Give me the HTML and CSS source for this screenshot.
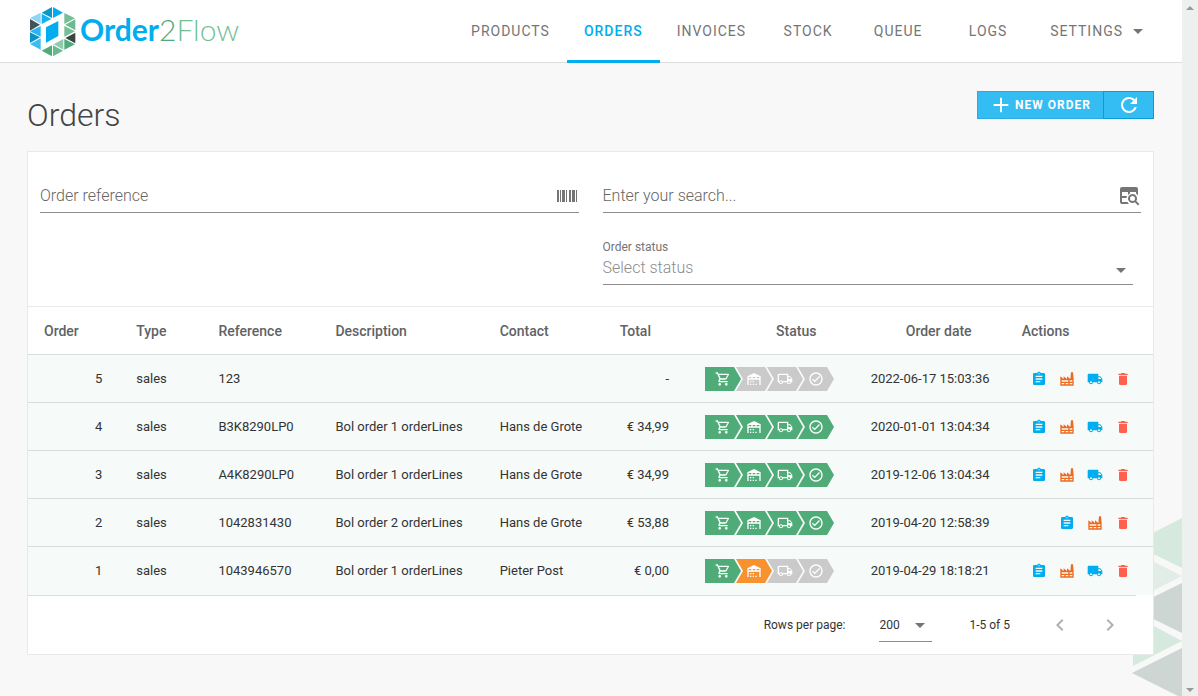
FILE: index.html
```html
<!DOCTYPE html>
<html lang="en">
<head>
  <meta charset="UTF-8" />
  <meta name="viewport" content="width=device-width, initial-scale=1.0"/>
  <title>Order2Flow - Orders</title>
  <link rel="stylesheet" href="styles.css">
</head>
<body>
  <!-- Icon set -->
  <svg class="sprite" aria-hidden="true">
    <symbol id="cart" viewBox="0 0 24 24"><path d="M17,18A2,2 0 0,1 19,20A2,2 0 0,1 17,22C15.89,22 15,21.1 15,20C15,18.89 15.89,18 17,18M1,2H4.27L5.21,4H20A1,1 0 0,1 21,5C21,5.17 20.95,5.34 20.88,5.5L17.3,11.97C16.96,12.58 16.3,13 15.55,13H8.1L7.2,14.63L7.17,14.75A0.25,0.25 0 0,0 7.42,15H19V17H7C5.89,17 5,16.1 5,15C5,14.65 5.09,14.32 5.24,14.04L6.6,11.59L3,4H1V2M7,18A2,2 0 0,1 9,20A2,2 0 0,1 7,22C5.89,22 5,21.1 5,20C5,18.89 5.89,18 7,18M16,11L18.78,6H6.14L8.5,11H16Z"/></symbol>
    <symbol id="warehouse" viewBox="0 0 24 24"><path d="M6 19H8V21H6V19M12 3L2 8V21H4V13H20V21H22V8L12 3M8 11H4V9H8V11M14 11H10V9H14V11M20 11H16V9H20V11M6 15H8V17H6V15M10 15H12V17H10V15M10 19H12V21H10V19M14 19H16V21H14V19Z"/></symbol>
    <symbol id="truck-outline" viewBox="0 0 24 24"><path d="M18 18.5C18.83 18.5 19.5 17.83 19.5 17C19.5 16.17 18.83 15.5 18 15.5C17.17 15.5 16.5 16.17 16.5 17C16.5 17.83 17.17 18.5 18 18.5M19.5 9.5H17V12H21.46L19.5 9.5M6 18.5C6.83 18.5 7.5 17.83 7.5 17C7.5 16.17 6.83 15.5 6 15.5C5.17 15.5 4.5 16.17 4.5 17C4.5 17.83 5.17 18.5 6 18.5M20 8L23 12V17H21C21 18.66 19.66 20 18 20C16.34 20 15 18.66 15 17H9C9 18.66 7.66 20 6 20C4.34 20 3 18.66 3 17H1V6C1 4.89 1.89 4 3 4H17V8H20M3 6V15H3.76C4.31 14.39 5.11 14 6 14C6.89 14 7.69 14.39 8.24 15H15V6H3Z"/></symbol>
    <symbol id="check" viewBox="0 0 24 24"><path d="M12 2C6.5 2 2 6.5 2 12S6.5 22 12 22 22 17.5 22 12 17.5 2 12 2M12 20C7.59 20 4 16.41 4 12S7.59 4 12 4 20 7.59 20 12 16.41 20 12 20M16.59 7.58L10 14.17L7.41 11.59L6 13L10 17L18 9L16.59 7.58Z"/></symbol>
    <symbol id="clipboard" viewBox="0 0 24 24"><path d="M17,9H7V7H17M17,13H7V11H17M14,17H7V15H14M12,3A1,1 0 0,1 13,4A1,1 0 0,1 12,5A1,1 0 0,1 11,4A1,1 0 0,1 12,3M19,3H14.82C14.4,1.84 13.3,1 12,1C10.7,1 9.6,1.84 9.18,3H5A2,2 0 0,0 3,5V19A2,2 0 0,0 5,21H19A2,2 0 0,0 21,19V5A2,2 0 0,0 19,3Z"/></symbol>
    <symbol id="factory" viewBox="0 0 24 24"><path d="M4,18V20H8V18H4M4,14V16H14V14H4M10,18V20H14V18H10M16,14V16H20V14H16M16,18V20H20V18H16M2,22V8L7,12V8L12,12V8L17,12L18,2H21L22,12V22H2Z"/></symbol>
    <symbol id="truck" viewBox="0 0 24 24"><path d="M18,18.5A1.5,1.5 0 0,1 16.5,17A1.5,1.5 0 0,1 18,15.5A1.5,1.5 0 0,1 19.5,17A1.5,1.5 0 0,1 18,18.5M19.5,9.5L21.46,12H17V9.5M6,18.5A1.5,1.5 0 0,1 4.5,17A1.5,1.5 0 0,1 6,15.5A1.5,1.5 0 0,1 7.5,17A1.5,1.5 0 0,1 6,18.5M20,8H17V4H3C1.89,4 1,4.89 1,6V17H3A3,3 0 0,0 6,20A3,3 0 0,0 9,17H15A3,3 0 0,0 18,20A3,3 0 0,0 21,17H23V12L20,8Z"/></symbol>
    <symbol id="delete" viewBox="0 0 24 24"><path d="M19,4H15.5L14.5,3H9.5L8.5,4H5V6H19M6,19A2,2 0 0,0 8,21H16A2,2 0 0,0 18,19V7H6V19Z"/></symbol>
    <symbol id="plus" viewBox="0 0 24 24"><path d="M20,13H13V20H11V13H4V11H11V4H13V11H20V13Z"/></symbol>
    <symbol id="refresh" viewBox="0 0 24 24"><path d="M17.65,6.35C16.2,4.9 14.21,4 12,4A8,8 0 0,0 4,12A8,8 0 0,0 12,20C15.73,20 18.84,17.45 19.73,14H17.65C16.83,16.33 14.61,18 12,18A6,6 0 0,1 6,12A6,6 0 0,1 12,6C13.66,6 15.14,6.69 16.22,7.78L13,11H20V4L17.65,6.35Z"/></symbol>
    <symbol id="barcode" viewBox="0 0 24 24"><path d="M2,6H4V18H2V6M5,6H6V18H5V6M7,6H10V18H7V6M11,6H12V18H11V6M14,6H16V18H14V6M17,6H20V18H17V6M21,6H22V18H21V6Z"/></symbol>
    <symbol id="table-search" viewBox="0 0 24 24"><path d="M5 3H19A2 2 0 0 1 21 5V11.5A6 6 0 0 0 19 9.5V8H13V9.5A6 6 0 0 0 11 11V8H5V12H10A6 6 0 0 0 9.500 14H5V18H10.500A6 6 0 0 0 12 20H5A2 2 0 0 1 3 18V5A2 2 0 0 1 5 3Z"/><path d="M15.500 10A4.500 4.500 0 0 1 19.300 16.900L22.400 20L21 21.400L17.900 18.300A4.500 4.500 0 1 1 15.500 10M15.500 12A2.500 2.500 0 1 0 15.500 17A2.500 2.500 0 1 0 15.500 12Z"/></symbol>
    <symbol id="prev" viewBox="0 0 24 24"><path d="M15.41,16.58L10.83,12L15.41,7.41L14,6L8,12L14,18L15.41,16.58Z"/></symbol>
    <symbol id="next" viewBox="0 0 24 24"><path d="M8.59,16.58L13.17,12L8.59,7.41L10,6L16,12L10,18L8.59,16.58Z"/></symbol>
    <symbol id="menu-down" viewBox="0 0 24 24"><path d="M7,10L12,15L17,10H7Z"/></symbol>
  </svg>

  <div class="page">
    <svg class="pattern" viewBox="1132 517 50 179" aria-hidden="true">
      <path fill="#d5e9df" d="M1133 543L1182 518V568L1133 544Z"/>
      <path fill="#e3ede8" d="M1133 551L1182 576L1133 601Z"/>
      <path fill="#cdd6d2" d="M1133 607L1182 583V633L1133 609Z"/>
      <path fill="#d5e9df" d="M1133 615L1182 641L1133 666Z"/>
      <path fill="#cdd6d2" d="M1132 673L1182 648V698Z"/>
    </svg>

    <header>
      <a class="logo" href="index.html">
        <svg viewBox="88 16 141 153" aria-hidden="true">
          <path fill="#8fd4f5" d="M123 36V69L91 52Z"/>
          <path fill="#44525c" d="M91 55V90L121 72Z"/>
          <path fill="#29b6f0" d="M123 76V108L91 92Z"/>
          <path fill="#0a93c8" d="M91 95V127L121 110Z"/>
          <path fill="#3bbdf3" d="M123 113V147L91 130Z"/>
          <path fill="#0a97cc" d="M157 19V52L126 36Z"/>
          <path fill="#00adef" d="M160 19V52L190 36Z"/>
          <path fill="#12b3f2" d="M126 39V70L155 55Z"/>
          <path fill="#75be98" d="M194 37V70L226 53Z"/>
          <path fill="#6dba91" d="M227 56V89L197 72Z"/>
          <path fill="#75be98" d="M194 76V108L226 92Z"/>
          <path fill="#3b4444" d="M227 96V128L197 112Z"/>
          <path fill="#4fab77" d="M194 115V147L226 131Z"/>
          <path fill="#8fcbaa" d="M191 115V147L162 131Z"/>
          <path fill="#4fab77" d="M157 134V167L126 150Z"/>
          <path fill="#69b98e" d="M160 134V167L190 150Z"/>
          <path fill="#00adef" d="M139 80L176 61V106L139 126Z"/>
        </svg>
        <span class="logo-text"><b>Order</b><i>2</i>Flow</span>
      </a>
      <nav>
        <a href="products.html">Products</a>
        <a class="active" href="orders.html">Orders</a>
        <a href="invoices.html">Invoices</a>
        <a href="stock.html">Stock</a>
        <a href="queue.html">Queue</a>
        <a href="logs.html">Logs</a>
        <a class="has-menu" href="settings.html">Settings <svg><use href="#menu-down"/></svg></a>
      </nav>
    </header>

    <main>
      <div class="title-bar">
        <h1>Orders</h1>
        <div class="buttons">
          <button type="button" class="btn"><svg><use href="#plus"/></svg>New order</button>
          <button type="button" class="btn btn-refresh" aria-label="Refresh"><svg><use href="#refresh"/></svg></button>
        </div>
      </div>

      <section class="card">
        <form class="filters">
          <div class="field">
            <input type="text" placeholder="Order reference" aria-label="Order reference" />
            <svg><use href="#barcode"/></svg>
          </div>
          <div class="field">
            <input type="text" placeholder="Enter your search..." aria-label="Search" />
            <svg><use href="#table-search"/></svg>
          </div>
          <div class="status-field">
            <label for="orderStatus">Order status</label>
            <div class="select">
              <select id="orderStatus"><option>Select status</option></select>
              <svg><use href="#menu-down"/></svg>
            </div>
          </div>
        </form>

        <table>
          <colgroup>
            <col class="col-order"><col class="col-type"><col class="col-reference"><col class="col-description"><col class="col-contact"><col class="col-total"><col class="col-status"><col class="col-date"><col class="col-actions">
          </colgroup>
          <thead>
            <tr>
              <th>Order</th>
              <th>Type</th>
              <th>Reference</th>
              <th>Description</th>
              <th>Contact</th>
              <th class="sort-end">Total</th>
              <th class="sort-end">Status</th>
              <th class="sort-end">Order date</th>
              <th>Actions</th>
            </tr>
          </thead>
          <tbody id="orderRows"></tbody>
        </table>

        <footer>
          <label for="rowsPerPage">Rows per page:</label>
          <div class="select rows-select">
            <select id="rowsPerPage"><option>200</option></select>
            <svg><use href="#menu-down"/></svg>
          </div>
          <span class="range">1-5 of 5</span>
          <div class="pager">
            <button type="button" aria-label="Previous page" disabled><svg><use href="#prev"/></svg></button>
            <button type="button" aria-label="Next page" disabled><svg><use href="#next"/></svg></button>
          </div>
        </footer>
      </section>
    </main>
  </div>

  <div class="scrollbar" aria-hidden="true">
    <span class="arrow-up"></span>
    <span class="arrow-down"></span>
  </div>

  <script src="orders.js"></script>
</body>
</html>
```
FILE: styles.css
```css
/* Base Styles */
* {
  box-sizing: border-box;
}

body {
  display: flex;
  min-height: 100vh;
  margin: 0;
  font-family: Roboto, sans-serif;
  font-size: 13px;
  color: #333;
  background-color: #f8f8f8;
}

svg {
  fill: currentColor;
}

button,
input,
select {
  font-family: inherit;
  border: 0;
  padding: 0;
  background: none;
}

.sprite {
  position: absolute;
  width: 0;
  height: 0;
}

.page {
  position: relative;
  flex: 1;
  min-width: 0;
}

.pattern {
  position: absolute;
  right: 0;
  bottom: 0;
  width: 50px;
  height: 179px;
}

/* Header */
header {
  display: flex;
  justify-content: space-between;
  height: 63px;
  padding: 0 24px 0 29px;
  background-color: #fff;
  border-bottom: 1px solid #ddd;
}

.logo {
  display: flex;
  align-items: center;
  gap: 4px;
  color: #72bf97;
  text-decoration: none;
}

.logo svg {
  width: 47px;
  height: 51px;
}

.logo-text {
  padding-bottom: 4px;
  font-family: Lato, sans-serif;
  font-size: 30px;
  font-weight: 300;
}

.logo-text b {
  font-weight: 700;
  color: #00adef;
}

.logo-text i {
  font-style: normal;
  color: #4fab77;
}

nav {
  display: flex;
}

nav a {
  display: flex;
  align-items: center;
  justify-content: center;
  gap: 3px;
  min-width: 90px;
  height: 63px;
  padding: 0 17px;
  border-top: 1px solid transparent;
  border-bottom: 3px solid transparent;
  font-size: 14px;
  letter-spacing: 1px;
  text-transform: uppercase;
  text-decoration: none;
  color: #757575;
}

nav a.active {
  font-weight: 500;
  color: #00adef;
  border-bottom-color: #00adef;
}

nav svg {
  width: 24px;
  height: 24px;
}

nav .has-menu {
  padding-right: 8px;
}

/* Title */
main {
  position: relative;
  padding: 28px 28px 0 27px;
}

.title-bar {
  display: flex;
  justify-content: space-between;
  align-items: flex-start;
  height: 60px;
}

h1 {
  margin: 0;
  font-size: 32px;
  font-weight: 300;
  line-height: 48px;
  color: #444;
}

.buttons {
  display: flex;
}

.btn {
  display: flex;
  align-items: center;
  justify-content: center;
  gap: 3px;
  height: 28px;
  padding: 0 12px;
  border: 1px solid #2cabe0;
  background-color: #33bdf2;
  font-size: 12px;
  font-weight: 700;
  letter-spacing: 1px;
  text-transform: uppercase;
  color: #fff;
}

.btn svg {
  width: 22px;
  height: 22px;
}

.btn-refresh {
  width: 51px;
  margin-left: -1px;
  border-color: #0a9bd8;
}

.btn-refresh svg {
  width: 24px;
  height: 24px;
}

/* Card and filters */
.card {
  background-color: #fff;
  border: 1px solid #e8eaea;
}

.filters {
  display: grid;
  grid-template-columns: 1fr 1fr;
  column-gap: 24px;
  padding: 28px 12px 21px;
}

.field {
  display: flex;
  align-items: center;
  height: 33px;
  border-bottom: 1px solid #8c8c8c;
}

.field input {
  flex: 1;
  min-width: 0;
  height: 32px;
  padding-bottom: 2px;
  font-size: 16px;
  outline: none;
}

.field input::placeholder {
  color: #666;
  opacity: 1;
  font-weight: 300;
}

.field svg {
  width: 24px;
  height: 24px;
  color: #757575;
}

.status-field {
  grid-column: 2;
  margin: 26px 8px 0 0;
}

.status-field label {
  display: block;
  font-size: 12px;
  line-height: 16px;
  color: #757575;
}

.select {
  display: flex;
  position: relative;
  align-items: center;
  border-bottom: 1px solid #8c8c8c;
}

.select select {
  flex: 1;
  height: 29px;
  padding-bottom: 5px;
  appearance: none;
  font-size: 16px;
  font-weight: 300;
  color: #8c8c8c;
}

.select svg {
  position: absolute;
  right: 0;
  width: 24px;
  height: 24px;
  color: #757575;
  pointer-events: none;
}

/* Orders table */
table {
  width: 100%;
  table-layout: fixed;
  border-collapse: separate;
  border-spacing: 0;
  border-top: 1px solid #e8eaea;
}

.col-order { width: 8.2%; }
.col-type { width: 7.3%; }
.col-reference { width: 10.4%; }
.col-description { width: 14.6%; }
.col-contact { width: 10.6%; }
.col-total { width: 7.3%; }
.col-status { width: 14.7%; }
.col-date { width: 13.8%; }
.col-actions { width: 13.1%; }

th,
td {
  height: 48px;
  padding: 0 16px;
  border-bottom: 1px solid #d9dedc;
  text-align: left;
  white-space: nowrap;
}

th {
  font-size: 14px;
  font-weight: 500;
  color: #606366;
}

th.sort-end {
  padding-right: 34px;
  text-align: right;
}

tbody tr {
  background-color: #f6faf9;
}

tbody tr:last-child td {
  border-bottom-color: transparent;
}

td.num {
  text-align: right;
}

td:first-child {
  padding-right: 18px;
}

.status {
  display: block;
  width: 129px;
  height: 24px;
  margin-left: auto;
  color: #fff;
}

.step-todo { fill: #cacaca; }
.step-busy { fill: #f7922f; }
.step-done { fill: #4fab77; }

.actions {
  display: flex;
  justify-content: flex-end;
}

.actions button {
  display: flex;
  justify-content: center;
  width: 28px;
}

.actions svg {
  width: 16px;
  height: 16px;
}

.clipboard,
.truck { color: #00adef; }
.factory { color: #eb6b20; }
.delete { color: #ff6150; }

/* Table footer */
footer {
  display: flex;
  align-items: center;
  justify-content: flex-end;
  height: 59px;
  margin-right: 17px;
  border-top: 1px solid #d9dedc;
  font-size: 12px;
}

.rows-select {
  width: 53px;
  margin: 0 37px 0 34px;
}

.rows-select select {
  height: 33px;
  padding-bottom: 0;
  font-size: 12px;
  font-weight: 400;
  color: #333;
}

.pager {
  display: flex;
  gap: 26px;
  margin: 0 14px 0 38px;
}

.pager button {
  display: flex;
  color: #b0b0b0;
}

.pager svg {
  width: 24px;
  height: 24px;
}

/* Scrollbar */
.scrollbar {
  display: flex;
  flex-direction: column;
  justify-content: space-between;
  align-items: center;
  width: 16px;
  padding: 6px 0 4px;
  background-color: #eef0f0;
}

.arrow-up,
.arrow-down {
  border: 4px solid transparent;
}

.arrow-up {
  border-top: 0;
  border-bottom-color: #999;
}

.arrow-down {
  border-bottom: 0;
  border-top-color: #999;
}
```
FILE: orders.js
```js
const orders = [
  { id: 5, reference: '123', description: '', contact: '', total: '-', status: ['done', 'todo', 'todo', 'todo'], date: '2022-06-17 15:03:36', truck: true },
  { id: 4, reference: 'B3K8290LP0', description: 'Bol order 1 orderLines', contact: 'Hans de Grote', total: '€ 34,99', status: ['done', 'done', 'done', 'done'], date: '2020-01-01 13:04:34', truck: true },
  { id: 3, reference: 'A4K8290LP0', description: 'Bol order 1 orderLines', contact: 'Hans de Grote', total: '€ 34,99', status: ['done', 'done', 'done', 'done'], date: '2019-12-06 13:04:34', truck: true },
  { id: 2, reference: '1042831430', description: 'Bol order 2 orderLines', contact: 'Hans de Grote', total: '€ 53,88', status: ['done', 'done', 'done', 'done'], date: '2019-04-20 12:58:39', truck: false },
  { id: 1, reference: '1043946570', description: 'Bol order 1 orderLines', contact: 'Pieter Post', total: '€ 0,00', status: ['done', 'busy', 'todo', 'todo'], date: '2019-04-29 18:18:21', truck: true }
];

const steps = [
  { icon: 'cart', x: 10, shape: 'M0 0H29L36 12L29 24H0Z' },
  { icon: 'warehouse', x: 41, shape: 'M31 0H60L67 12L60 24H31L38 12Z' },
  { icon: 'truck-outline', x: 72, shape: 'M62 0H91L98 12L91 24H62L69 12Z' },
  { icon: 'check', x: 103, shape: 'M93 0H122L129 12L122 24H93L100 12Z' }
];

function statusBar(status) {
  const parts = steps.map((step, i) =>
    `<path class="step-${status[i]}" d="${step.shape}"/><use href="#${step.icon}" x="${step.x}" y="4" width="16" height="16"/>`
  ).join('');
  return `<svg class="status" viewBox="0 0 129 24">${parts}</svg>`;
}

function actionButton(icon, label) {
  return `<button type="button" class="${icon}" aria-label="${label}"><svg><use href="#${icon}"/></svg></button>`;
}

document.getElementById('orderRows').innerHTML = orders.map(order => `
  <tr>
    <td class="num">${order.id}</td>
    <td>sales</td>
    <td>${order.reference}</td>
    <td>${order.description}</td>
    <td>${order.contact}</td>
    <td class="num">${order.total}</td>
    <td>${statusBar(order.status)}</td>
    <td class="num">${order.date}</td>
    <td>
      <div class="actions">
        ${actionButton('clipboard', 'Order details')}
        ${actionButton('factory', 'Production')}
        ${order.truck ? actionButton('truck', 'Shipment') : ''}
        ${actionButton('delete', 'Delete')}
      </div>
    </td>
  </tr>`).join('');
```
